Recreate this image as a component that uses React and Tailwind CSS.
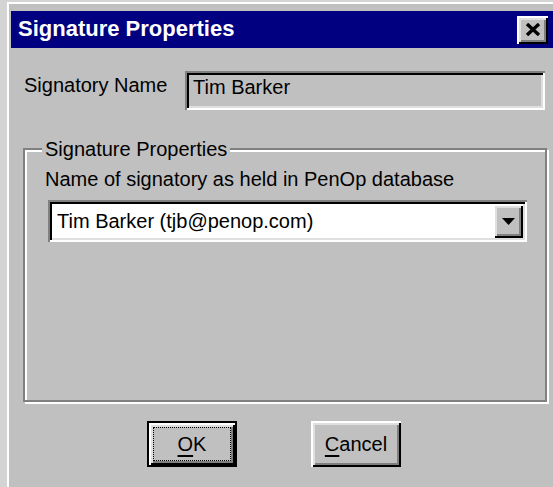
import React from 'react';

// Win95 bevels, built from stacked inset shadows
const raised =
  'shadow-[inset_2px_2px_0_#ffffff,inset_-2px_-2px_0_#000000,inset_4px_4px_0_#dfdfdf,inset_-4px_-4px_0_#808080]';
const sunken =
  'shadow-[inset_2px_2px_0_#808080,inset_-2px_-2px_0_#ffffff,inset_4px_4px_0_#000000,inset_-4px_-4px_0_#dfdfdf]';

function CloseButton() {
  return (
    <button
      type="button"
      aria-label="Close"
      className={`flex h-[28px] w-[31px] items-center justify-center bg-[#c0c0c0] ${raised}`}
    >
      <svg width="16" height="13" viewBox="0 0 16 13" aria-hidden>
        <path d="M2 1 L14 12 M14 1 L2 12" stroke="#000" strokeWidth="3.4" />
      </svg>
    </button>
  );
}

function DropArrow() {
  return (
    <div className={`flex h-full w-[30px] items-center justify-center bg-[#c0c0c0] ${raised}`}>
      <svg width="13" height="7" viewBox="0 0 13 7" aria-hidden>
        <path d="M0 0 H13 L6.5 7 Z" fill="#000" />
      </svg>
    </div>
  );
}

export default function App() {
  return (
    <div
      className="h-[487px] w-[553px] overflow-hidden bg-[#d4d4d4] pl-[7px] pt-[2px] text-[20px] leading-[23px] text-black"
      style={{ fontFamily: '"Liberation Sans", Arial, sans-serif' }}
    >
      <div className="flex h-full flex-col border-l-2 border-t-2 border-white bg-[#c0c0c0] pl-[2px] pt-[7px]">
        {/* title bar */}
        <div className="flex h-[37px] shrink-0 items-center justify-between bg-[#000080] pl-[7px] pr-[5px]">
          <span className="pb-[3px] text-[22px] font-bold leading-[25px] text-white">
            Signature Properties
          </span>
          <CloseButton />
        </div>

        <div className="pl-[12px]">
          {/* signatory name row */}
          <div className="mt-[23px] flex items-start">
            <span className="ml-[1px] mt-[3px] w-[161px]">Signatory Name</span>
            <div className={`h-[39px] w-[360px] bg-[#c0c0c0] pl-[8px] pt-[5px] ${sunken}`}>
              Tim Barker
            </div>
          </div>

          {/* group box */}
          <div className="relative mt-[38px] h-[254px] w-[524px] border-2 border-[#808080] pl-[20px] pt-[18px] shadow-[inset_2px_2px_0_#ffffff,2px_2px_0_#ffffff]">
            <span className="absolute left-[17px] top-[-12px] bg-[#c0c0c0] px-[3px]">
              Signature Properties
            </span>
            <p>Name of signatory as held in PenOp database</p>
            <div className={`ml-[3px] mt-[9px] flex h-[42px] w-[479px] bg-white p-[4px] ${sunken}`}>
              <div className="flex flex-1 items-center pl-[5px]">Tim Barker (tjb@penop.com)</div>
              <DropArrow />
            </div>
          </div>

          {/* dialog buttons */}
          <div className="ml-[124px] mt-[19px] flex gap-[74px]">
            <button
              type="button"
              className="h-[46px] w-[90px] border-2 border-black bg-[#c0c0c0]"
            >
              <div className={`flex h-full w-full items-center justify-center ${raised} p-[4px]`}>
                <div className="flex h-full w-full items-center justify-center border border-dotted border-black">
                  <span className="underline decoration-2 underline-offset-[4px]">O</span>K
                </div>
              </div>
            </button>
            <button
              type="button"
              className={`flex h-[46px] w-[90px] items-center justify-center bg-[#c0c0c0] ${raised}`}
            >
              <span className="underline decoration-2 underline-offset-[4px]">C</span>ancel
            </button>
          </div>
        </div>
      </div>
    </div>
  );
}
